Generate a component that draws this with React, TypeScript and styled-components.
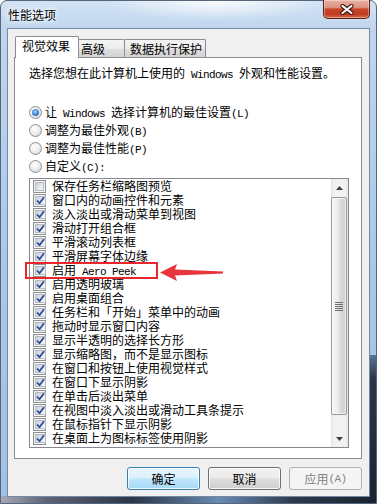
import React from 'react';
import styled, { createGlobalStyle, css } from 'styled-components';

const GlobalStyle = createGlobalStyle`
  html, body { margin: 0; padding: 0; background: #ffffff; }
  body {
    font-family: "Noto Sans CJK SC", "Noto Sans", sans-serif;
    font-size: 12px;
    color: #000;
  }
  *, *::before, *::after { box-sizing: border-box; }
`;

const Window = styled.div`
  position: relative;
  width: 377px;
  height: 504px;
  display: flex;
  flex-direction: column;
  padding: 0 6px 6px 6px;
  border: 1px solid #56657a;
  border-radius: 7px 7px 0 0;
  background:
    linear-gradient(180deg, #5a7594 0%, #2b3648 16%, #1b2330 100%) right bottom / 7px 148px no-repeat,
    linear-gradient(90deg, #a7a9b6 0%, #5d6476 12%, #2c3646 35%, #6a8bb5 58%, #2d3a4c 78%, #1a2230 100%) left bottom / 100% 7px no-repeat,
    radial-gradient(ellipse 110px 20px at 215px 0px, rgba(255, 255, 255, 0.85), rgba(255, 255, 255, 0)) no-repeat,
    linear-gradient(180deg, #d3e3f4 0%, #bfd5ee 28px, #aac7e8 55%, #a0c0e5 100%);
`;

const TitleBar = styled.div`
  flex: none;
  height: 27px;
  display: flex;
  align-items: flex-start;
  justify-content: space-between;
`;

const Title = styled.div`
  margin: 7px 0 0 1px;
  height: 14px;
  line-height: 14px;
  font-size: 12px;
  color: #000;
  text-shadow: 0 0 3px #fff, 0 0 6px rgba(255, 255, 255, 0.95), 0 0 10px rgba(255, 255, 255, 0.8);
`;

const CloseButton = styled.div`
  width: 47px;
  height: 19px;
  margin-top: -1px;
  border: 1px solid #5a2116;
  border-top: none;
  border-radius: 0 0 5px 5px;
  background: linear-gradient(180deg, #eab0a3 0%, #dc917f 42%, #c9472c 50%, #c23a1f 78%, #d8694b 100%);
  box-shadow: inset 0 0 0 1px rgba(255, 255, 255, 0.35);
  display: flex;
  align-items: center;
  justify-content: center;
`;

const Client = styled.div`
  flex: 1;
  display: flex;
  flex-direction: column;
  border: 1px solid #7589a3;
  background: #f0f0f0;
  padding: 7px 7px 0 6px;
`;

const TabStrip = styled.div`
  display: flex;
  align-items: flex-end;
  height: 22px;
  margin-bottom: -1px;
  padding-left: 1px;
`;

const Tab = styled.div<{ $active?: boolean; $w: number; $pl: number }>`
  width: ${(p) => p.$w}px;
  padding-left: ${(p) => p.$pl}px;
  padding-top: 2px;
  border: 1px solid #898c95;
  border-bottom: none;
  border-radius: 2px 2px 0 0;
  line-height: 14px;
  white-space: nowrap;
  & + & {
    margin-left: -1px;
  }
  ${(p) =>
    p.$active
      ? css`
          height: 22px;
          background: #ffffff;
          position: relative;
          z-index: 2;
        `
      : css`
          height: 19px;
          background: linear-gradient(180deg, #f4f4f4 0%, #ececec 48%, #dedede 52%, #d2d2d2 100%);
        `}
`;

const Panel = styled.div`
  position: relative;
  z-index: 1;
  height: 402px;
  border: 1px solid #898c95;
  background: #ffffff;
  padding: 8px 0 0 14px;
  display: flex;
  flex-direction: column;
`;

const Intro = styled.div`
  height: 14px;
  line-height: 14px;
  white-space: nowrap;
  margin-bottom: 23px;
`;

const Label = styled.span`
  display: block;
  height: 14px;
  line-height: 14px;
  white-space: nowrap;
`;

const Lat = styled.span`
  font-family: "Liberation Mono", "DejaVu Sans Mono", monospace;
  font-size: 11px;
  letter-spacing: -0.6px;
  white-space: pre;
`;

const RadioRow = styled.div`
  height: 18px;
  display: flex;
  align-items: center;
  gap: 3px;
`;

const Radio = styled.span<{ $on?: boolean }>`
  flex: none;
  width: 13px;
  height: 13px;
  border-radius: 50%;
  border: 1px solid #8c8f94;
  background: radial-gradient(circle at 40% 35%, #ffffff 0%, #eeeeee 45%, #cfd2d7 100%);
  display: flex;
  align-items: center;
  justify-content: center;
  &::after {
    content: '';
    width: 7px;
    height: 7px;
    border-radius: 50%;
    background: ${(p) =>
      p.$on ? 'radial-gradient(circle at 45% 40%, #a9d6fa 0%, #3a7fd0 55%, #1c4f97 100%)' : 'transparent'};
  }
`;

const ListBox = styled.div`
  position: relative;
  margin-top: 3px;
  width: 320px;
  height: 270px;
  border: 1px solid #828790;
  background: #ffffff;
  display: flex;
`;

const Items = styled.div`
  flex: 1;
  display: flex;
  flex-direction: column;
  padding-left: 3px;
`;

const Item = styled.div`
  height: 14px;
  display: flex;
  align-items: center;
  gap: 6px;
`;

const Check = styled.span`
  flex: none;
  width: 13px;
  height: 13px;
  border: 1px solid #8e8f8f;
  background: #f4f4f4;
  padding: 1px;
  display: flex;
`;

const CheckInner = styled.span`
  flex: 1;
  border: 1px solid #b6bbc2;
  background: linear-gradient(135deg, #c9cdd4 0%, #e4e6e9 50%, #f8f8f8 100%);
  display: flex;
  align-items: center;
  justify-content: center;
`;

const ScrollBar = styled.div`
  width: 17px;
  display: flex;
  flex-direction: column;
  background: linear-gradient(90deg, #e3e3e3 0%, #f2f2f2 18%, #f2f2f2 82%, #e6e6e6 100%);
`;

const ArrowButton = styled.div`
  flex: none;
  height: 17px;
  display: flex;
  align-items: center;
  justify-content: center;
`;

const Track = styled.div`
  flex: 1;
  padding-top: 1px;
`;

const Thumb = styled.div`
  width: 16px;
  height: 218px;
  border: 1px solid #979797;
  border-radius: 2px;
  background: linear-gradient(90deg, #f6f6f6 0%, #ececec 45%, #dcdcdc 55%, #cfcfcf 100%);
  box-shadow: inset 0 0 0 1px rgba(255, 255, 255, 0.7);
  display: flex;
  align-items: center;
  justify-content: center;
`;

const Highlight = styled.div`
  position: absolute;
  left: -5px;
  top: 83px;
  width: 133px;
  height: 17px;
  border: 2px solid #e9262c;
  pointer-events: none;
`;

const ArrowMark = styled.svg`
  position: absolute;
  left: 130px;
  top: 84px;
  pointer-events: none;
`;

const ButtonRow = styled.div`
  display: flex;
  justify-content: flex-end;
  gap: 8px;
  margin-top: 8px;
`;

const Button = styled.div<{ $kind?: 'default' | 'normal' | 'disabled' }>`
  width: 73px;
  height: 23px;
  border-radius: 3px;
  display: flex;
  align-items: center;
  justify-content: center;
  line-height: 14px;
  white-space: nowrap;
  ${(p) =>
    p.$kind === 'default'
      ? css`
          border: 1px solid #3c7fb1;
          background: linear-gradient(180deg, #eaf6fd 0%, #d9f0fc 48%, #bee6fd 52%, #a7d9f5 100%);
          box-shadow: inset 0 0 0 1px rgba(255, 255, 255, 0.8);
          color: #000;
        `
      : p.$kind === 'disabled'
      ? css`
          border: 1px solid #adb2b5;
          background: #f4f4f4;
          color: #838383;
        `
      : css`
          border: 1px solid #707070;
          background: linear-gradient(180deg, #f2f2f2 0%, #ebebeb 48%, #dddddd 52%, #cfcfcf 100%);
          box-shadow: inset 0 0 0 1px rgba(255, 255, 255, 0.8);
          color: #000;
        `}
`;

function rich(text: string) {
  const parts = text.split(/([\x20-\x7e]+)/).filter((s) => s.length > 0);
  return parts.map((s, i) =>
    /^[\x20-\x7e]+$/.test(s) ? <Lat key={i}>{s}</Lat> : <React.Fragment key={i}>{s}</React.Fragment>
  );
}

const items: [string, boolean][] = [
  ['保存任务栏缩略图预览', false],
  ['窗口内的动画控件和元素', true],
  ['淡入淡出或滑动菜单到视图', true],
  ['滑动打开组合框', true],
  ['平滑滚动列表框', true],
  ['平滑屏幕字体边缘', true],
  ['启用 Aero Peek', true],
  ['启用透明玻璃', true],
  ['启用桌面组合', true],
  ['任务栏和「开始」菜单中的动画', true],
  ['拖动时显示窗口内容', true],
  ['显示半透明的选择长方形', true],
  ['显示缩略图，而不是显示图标', true],
  ['在窗口和按钮上使用视觉样式', true],
  ['在窗口下显示阴影', true],
  ['在单击后淡出菜单', true],
  ['在视图中淡入淡出或滑动工具条提示', true],
  ['在鼠标指针下显示阴影', true],
  ['在桌面上为图标标签使用阴影', true],
];

const radios: [string, boolean][] = [
  ['让 Windows 选择计算机的最佳设置(L)', true],
  ['调整为最佳外观(B)', false],
  ['调整为最佳性能(P)', false],
  ['自定义(C):', false],
];

const CheckMark = () => (
  <svg width="9" height="9" viewBox="0 0 9 9">
    <path d="M1 4.5 L3.5 7.2 L8 1.2" fill="none" stroke="#2b4c9c" strokeWidth="1.8" strokeLinejoin="round" />
  </svg>
);

export default function App() {
  return (
    <>
      <GlobalStyle />
      <Window>
        <TitleBar>
          <Title>性能选项</Title>
          <CloseButton>
            <svg width="14" height="11" viewBox="0 0 14 11">
              <path d="M2.5 2 L11.5 9 M11.5 2 L2.5 9" stroke="#3e1810" strokeWidth="4.2" strokeLinecap="round" />
              <path d="M2.5 2 L11.5 9 M11.5 2 L2.5 9" stroke="#ffffff" strokeWidth="2.2" strokeLinecap="round" />
            </svg>
          </CloseButton>
        </TitleBar>
        <Client>
          <TabStrip>
            <Tab $active $w={64} $pl={6}>视觉效果</Tab>
            <Tab $w={47} $pl={2}>高级</Tab>
            <Tab $w={82} $pl={5}>数据执行保护</Tab>
          </TabStrip>
          <Panel>
            <Intro>{rich('选择您想在此计算机上使用的 Windows 外观和性能设置。')}</Intro>
            {radios.map(([label, on]) => (
              <RadioRow key={label}>
                <Radio $on={on} />
                <Label>{rich(label)}</Label>
              </RadioRow>
            ))}
            <ListBox>
              <Items>
                {items.map(([label, on]) => (
                  <Item key={label}>
                    <Check>
                      <CheckInner>{on && <CheckMark />}</CheckInner>
                    </Check>
                    <Label>{rich(label)}</Label>
                  </Item>
                ))}
              </Items>
              <ScrollBar>
                <ArrowButton>
                  <svg width="7" height="4" viewBox="0 0 7 4">
                    <path d="M0 4 L3.5 0 L7 4 Z" fill="#404040" />
                  </svg>
                </ArrowButton>
                <Track>
                  <Thumb>
                    <svg width="8" height="9" viewBox="0 0 8 9">
                      <path d="M0 0.5 H8 M0 2.5 H8 M0 4.5 H8 M0 6.5 H8 M0 8.5 H8" stroke="#6b6b6b" strokeWidth="1" />
                    </svg>
                  </Thumb>
                </Track>
                <ArrowButton>
                  <svg width="7" height="4" viewBox="0 0 7 4">
                    <path d="M0 0 L3.5 4 L7 0 Z" fill="#404040" />
                  </svg>
                </ArrowButton>
              </ScrollBar>
              <Highlight />
              <ArrowMark width="63" height="18" viewBox="0 0 63 18">
                <path d="M0 9.5 L17 1 L15 6.5 L63 8.4 L63 10.6 L15 12.5 L17 18 Z" fill="#e8353b" />
              </ArrowMark>
            </ListBox>
          </Panel>
          <ButtonRow>
            <Button $kind="default">确定</Button>
            <Button>取消</Button>
            <Button $kind="disabled">{rich('应用(A)')}</Button>
          </ButtonRow>
        </Client>
      </Window>
    </>
  );
}
